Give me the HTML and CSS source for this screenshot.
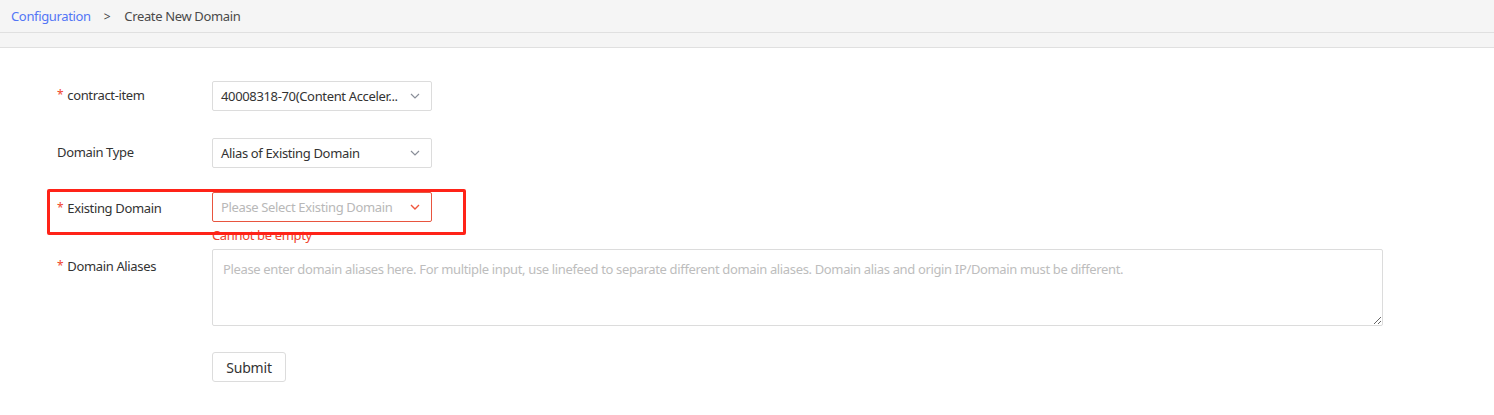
FILE: index.html
```html
<!DOCTYPE html>
<html>
<head>
<meta charset="utf-8">
<link rel="stylesheet" href="styles.css">
</head>
<body>
<div class="header">
  <div class="crumbs">
    <a class="crumb-link">Configuration</a>
    <span class="crumb-sep">&gt;</span>
    <span class="crumb-cur">Create New Domain</span>
  </div>
  <div class="band"></div>
</div>
<form class="form">
  <div class="item item-1">
    <label class="label"><span class="req">*</span>contract-item</label>
    <div class="control">
      <div class="select"><span class="sel-text">40008318-70(Content Acceler...</span><svg class="arrow" width="10" height="6" viewBox="0 0 10 6"><path d="M1 1l4 4 4-4" fill="none" stroke="#8a8f99" stroke-width="1.2"/></svg></div>
    </div>
  </div>
  <div class="item item-2">
    <label class="label">Domain Type</label>
    <div class="control">
      <div class="select"><span class="sel-text">Alias of Existing Domain</span><svg class="arrow" width="10" height="6" viewBox="0 0 10 6"><path d="M1 1l4 4 4-4" fill="none" stroke="#8a8f99" stroke-width="1.2"/></svg></div>
    </div>
  </div>
  <div class="item item-3">
    <div class="highlight"></div>
    <label class="label label-low"><span class="req">*</span>Existing Domain</label>
    <div class="control">
      <div class="select select-error"><span class="sel-text placeholder">Please Select Existing Domain</span><svg class="arrow" width="10" height="6" viewBox="0 0 10 6"><path d="M1 1l4 4 4-4" fill="none" stroke="#f0563c" stroke-width="1.4"/></svg></div>
      <div class="error">Cannot be empty</div>
    </div>
  </div>
  <div class="item item-4">
    <label class="label label-lower"><span class="req">*</span>Domain Aliases</label>
    <div class="control wide">
      <textarea class="textarea" placeholder="Please enter domain aliases here. For multiple input, use linefeed to separate different domain aliases. Domain alias and origin IP/Domain must be different."></textarea>
    </div>
  </div>
  <div class="item item-5">
    <div class="label"></div>
    <div class="control">
      <button type="button" class="btn">Submit</button>
    </div>
  </div>
</form>
</body>
</html>
```
FILE: styles.css
```css
html, body {
  margin: 0;
  padding: 0;
  background: #fff;
  font-family: "Noto Sans", "Open Sans", sans-serif;
  font-size: 13px;
  letter-spacing: -0.35px;
  color: #333;
}
.header {
  background: #f5f5f5;
}
.crumbs {
  display: flex;
  align-items: center;
  padding-left: 11px;
  border-bottom: 1px solid #e0e0e0;
  box-sizing: border-box;
  height: 33px;
}
.crumb-link {
  color: #5275f5;
}
.crumb-sep {
  margin: 0 14px 0 13px;
  color: #444;
  font-size: 12px;
}
.crumb-cur {
  color: #4a4a4a;
}
.band {
  height: 14px;
  border-bottom: 1px solid #e0e0e0;
  background: #f5f5f5;
}
.form {
  padding: 33px 0 0 57px;
}
.item {
  display: flex;
  align-items: flex-start;
  position: relative;
}
.item-1 { margin-bottom: 27px; }
.item-2 { margin-bottom: 24px; }
.item-3 { margin-bottom: 27px; }
.item-4 { margin-bottom: 26px; }
.label {
  width: 155px;
  flex: none;
  line-height: 28px;
  color: #333;
  display: flex;
  align-items: center;
}
.label-low {
  padding-top: 2px;
}
.label-lower {
  padding-top: 3px;
}
.req {
  color: #f0442c;
  margin-right: 4px;
  font-size: 12px;
}
.control {
  position: relative;
}
.control.wide {
  width: 1171px;
}
.select {
  width: 220px;
  height: 30px;
  box-sizing: border-box;
  border: 1px solid #dcdcdc;
  border-radius: 2px;
  display: flex;
  align-items: center;
  justify-content: space-between;
  padding: 0 11px 0 8px;
  background: #fff;
}
.sel-text {
  white-space: nowrap;
  color: #333;
}
.placeholder {
  color: #b8b8b8;
}
.select-error {
  border-color: #e8553f;
}
.error {
  position: absolute;
  top: 100%;
  left: 0;
  margin-top: 5px;
  color: #f0402a;
  font-size: 13px;
  line-height: 16px;
  white-space: nowrap;
}
.highlight {
  position: absolute;
  left: -10px;
  top: -3px;
  width: 419px;
  height: 46px;
  box-sizing: border-box;
  border: 3px solid #ff2318;
  border-radius: 2px;
  z-index: 2;
  pointer-events: none;
}
.textarea {
  display: block;
  width: 1171px;
  height: 77px;
  box-sizing: border-box;
  border: 1px solid #dcdcdc;
  border-radius: 2px;
  padding: 10px 10px;
  font-family: "Noto Sans", "Open Sans", sans-serif;
  font-size: 13px;
  letter-spacing: -0.35px;
  color: #333;
  resize: vertical;
  outline: none;
}
.textarea::placeholder {
  color: #bdbdbd;
}
.btn {
  width: 74px;
  height: 30px;
  border: 1px solid #dcdcdc;
  border-radius: 3px;
  background: #fff;
  font-family: "Noto Sans", "Open Sans", sans-serif;
  font-size: 14px;
  letter-spacing: -0.2px;
  color: #333;
  padding: 0;
}
```
